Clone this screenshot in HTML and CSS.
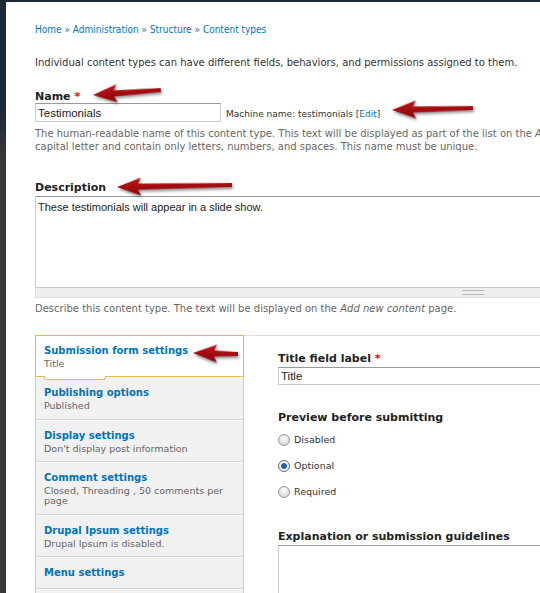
FILE: index.html
```html
<!DOCTYPE html>
<html lang="en">
<head>
    <meta charset="UTF-8">
    <title>Content types</title>
    <link rel="stylesheet" href="styles.css">
</head>
<body>
    <div class="page">
        <div class="breadcrumb">
            <a href="#">Home</a> » <a href="#">Administration</a> » <a href="#">Structure</a> » <a href="#">Content types</a>
        </div>

        <p class="intro">Individual content types can have different fields, behaviors, and permissions assigned to them.</p>

        <div class="form-item name-item">
            <label>Name <span class="req">*</span></label>
            <div class="name-row">
                <input type="text" class="text-input name-input" value="Testimonials">
                <span class="machine">Machine name: testimonials [<a href="#">Edit</a>]</span>
            </div>
            <div class="desc">
                The human-readable name of this content type. This text will be displayed as part of the list on the <em>Add new content</em> page.<br>
                capital letter and contain only letters, numbers, and spaces. This name must be unique.
            </div>
        </div>

        <div class="form-item description-item">
            <label>Description</label>
            <div class="textarea-wrap">
                <textarea class="textarea">These testimonials will appear in a slide show.</textarea>
                <div class="grip"><span></span></div>
            </div>
            <div class="desc">Describe this content type. The text will be displayed on the <em>Add new content</em> page.</div>
        </div>

        <div class="vtabs">
            <ul class="vtab-list">
                <li class="vtab active">
                    <a href="#">Submission form settings</a>
                    <span class="summary">Title</span>
                </li>
                <li class="vtab">
                    <a href="#">Publishing options</a>
                    <span class="summary">Published</span>
                </li>
                <li class="vtab">
                    <a href="#">Display settings</a>
                    <span class="summary">Don't display post information</span>
                </li>
                <li class="vtab">
                    <a href="#">Comment settings</a>
                    <span class="summary">Closed, Threading , 50 comments per page</span>
                </li>
                <li class="vtab">
                    <a href="#">Drupal Ipsum settings</a>
                    <span class="summary">Drupal Ipsum is disabled.</span>
                </li>
                <li class="vtab menu">
                    <a href="#">Menu settings</a>
                </li>
                <li class="vtab">
                    <a href="#">&nbsp;</a>
                </li>
            </ul>

            <div class="vtab-pane">
                <div class="form-item">
                    <label>Title field label <span class="req">*</span></label>
                    <input type="text" class="text-input title-input" value="Title">
                </div>

                <div class="form-item radios">
                    <label>Preview before submitting</label>
                    <div class="radio"><span class="dot"></span>Disabled</div>
                    <div class="radio"><span class="dot checked"></span>Optional</div>
                    <div class="radio"><span class="dot"></span>Required</div>
                </div>

                <div class="form-item">
                    <label>Explanation or submission guidelines</label>
                    <textarea class="textarea guidelines"></textarea>
                </div>
            </div>
        </div>
    </div>

    <!-- annotation arrows drawn over the screenshot -->
    <svg class="arrows" width="540" height="593" viewBox="0 0 540 593">
        <defs>
            <linearGradient id="red" x1="0" y1="0" x2="0" y2="1">
                <stop offset="0" stop-color="#c0141a"/>
                <stop offset="1" stop-color="#8a0508"/>
            </linearGradient>
        </defs>
        <g class="arrow" transform="translate(93,95) rotate(-4.2)">
            <path d="M0 0 L24 -9 L21 -3 L68 -2 L68 2 L21 3 L24 9 Z"/>
        </g>
        <g class="arrow" transform="translate(392,110) rotate(-1.4)">
            <path d="M0 0 L24 -9 L21 -3 L81 -2 L81 2 L21 3 L24 9 Z"/>
        </g>
        <g class="arrow" transform="translate(117,187) rotate(-1)">
            <path d="M0 0 L24 -9 L21 -3 L115 -2 L115 2 L21 3 L24 9 Z"/>
        </g>
        <g class="arrow" transform="translate(193,353) rotate(1.3)">
            <path d="M0 0 L24 -9 L21 -3 L45 -2 L45 2 L21 3 L24 9 Z"/>
        </g>
    </svg>
</body>
</html>
```

FILE: styles.css
```css
html {
    background: linear-gradient(#1b2a38 0, #1b2a38 110px, #383838 160px, #383838 100%);
    overflow: hidden;
}
body {
    margin: 0;
    padding: 2px 0 0 6px;
    font-family: "DejaVu Sans", Verdana, sans-serif;
    font-size: 10px;
    color: #333;
    height: 591px;
    overflow: hidden;
    position: relative;
}
a {
    color: #0074bd;
    text-decoration: none;
}
.page {
    background: #fff;
    width: 900px;
    height: 100%;
    padding: 22px 0 0 29px;
    box-sizing: border-box;
}
.breadcrumb {
    font-family: "DejaVu Sans Condensed", "DejaVu Sans", sans-serif;
    color: #3a6ea5;
    line-height: 12px;
}
.intro {
    margin: 21px 0 0;
    line-height: 12px;
}
.form-item label {
    display: block;
    font-weight: bold;
    font-size: 11px;
    color: #222;
    line-height: 13px;
}
.req {
    color: #e00;
}
.name-item {
    margin-top: 21px;
}
.name-row {
    display: flex;
    align-items: flex-end;
}
.text-input {
    font-family: "Liberation Sans", Arial, sans-serif;
    font-size: 11.5px;
    color: #222;
    height: 19px;
    padding: 1px 2px;
    border: 1px solid #ccc;
    border-top-color: #999;
    box-sizing: border-box;
    margin: 0;
}
.name-input {
    width: 186px;
}
.machine {
    font-size: 9px;
    margin: 0 0 3px 5px;
}
.desc {
    color: #666;
    line-height: 13px;
    margin-top: 5px;
    white-space: nowrap;
}
.description-item {
    margin-top: 28px;
}
.textarea-wrap {
    width: 876px;
    margin-top: 2px;
}
.textarea {
    display: block;
    width: 100%;
    height: 91px;
    margin: 0;
    padding: 4px 2px 2px;
    box-sizing: border-box;
    border: 1px solid #ccc;
    border-top-color: #999;
    border-bottom: none;
    resize: none;
    font-family: "Liberation Sans", Arial, sans-serif;
    font-size: 11px;
    color: #222;
}
.grip {
    height: 9px;
    background: #eee;
    border: 1px solid #ddd;
    border-top-color: #ccc;
    display: flex;
    justify-content: center;
    align-items: center;
}
.grip span {
    width: 22px;
    height: 3px;
    border-top: 1px solid #bbb;
    border-bottom: 1px solid #bbb;
}
.description-item .desc {
    margin-top: 4px;
}

/* Vertical tabs */
.vtabs {
    display: flex;
    margin-top: 20px;
}
.vtab-list {
    list-style: none;
    margin: 0;
    padding: 0;
    width: 207px;
    flex-shrink: 0;
    background: #f1f1f1;
    border-left: 1px solid #ccc;
    border-right: 1px solid #ccc;
}
.vtab {
    padding: 8px 9px 7.5px 8px;
    border-bottom: 1px solid #d4d4d4;
    border-top: 1px solid #fbfbfb;
}
.vtab a {
    display: block;
    font-weight: bold;
    font-size: 10px;
    line-height: 13px;
}
.summary {
    display: block;
    color: #666;
    font-size: 9.5px;
    line-height: 10px;
    margin-top: 2px;
}
.vtab.active {
    background: #fff;
    border: 1px solid #ebb44e;
    margin: 0 -1px;
    padding-bottom: 7px;
    position: relative;
}
.vtab.active::after {
    content: "";
    position: absolute;
    left: 8px;
    width: 60px;
    bottom: -4px;
    height: 3px;
    border: 1px solid #d8b878;
    border-top: none;
    border-radius: 0 0 3px 3px;
    background: #fff;
}
.vtab.menu {
    padding-bottom: 9px;
}
.vtab-pane {
    flex: 1;
    border-top: 1px solid #ddd;
    padding: 16px 0 0 34px;
}
.title-input {
    width: 400px;
    height: 18px;
    margin-top: 2px;
}
.radios {
    margin-top: 26px;
}
.radio {
    display: flex;
    align-items: center;
    font-size: 9.5px;
    height: 26px;
}
.radios label {
    margin-bottom: 2px;
}
.dot {
    width: 10px;
    height: 10px;
    border: 1px solid #999;
    border-radius: 50%;
    background: radial-gradient(circle at 50% 35%, #fff, #ccc);
    margin-right: 4px;
    position: relative;
    top: 1px;
}
.dot.checked {
    background: radial-gradient(circle, #1c4f99 0, #2b62b8 2.5px, #fff 3.5px, #ddd 100%);
    border-color: #666;
}
.guidelines {
    width: 400px;
    height: 80px;
    margin-top: 2px;
    border-bottom: 1px solid #ccc;
}
.radios + .form-item {
    margin-top: 26px;
}

/* Arrows */
.arrows {
    position: absolute;
    top: 0;
    left: 0;
    pointer-events: none;
}
.arrow path {
    fill: url(#red);
    filter: drop-shadow(1px 2px 1.5px rgba(0, 0, 0, 0.45));
}
```
